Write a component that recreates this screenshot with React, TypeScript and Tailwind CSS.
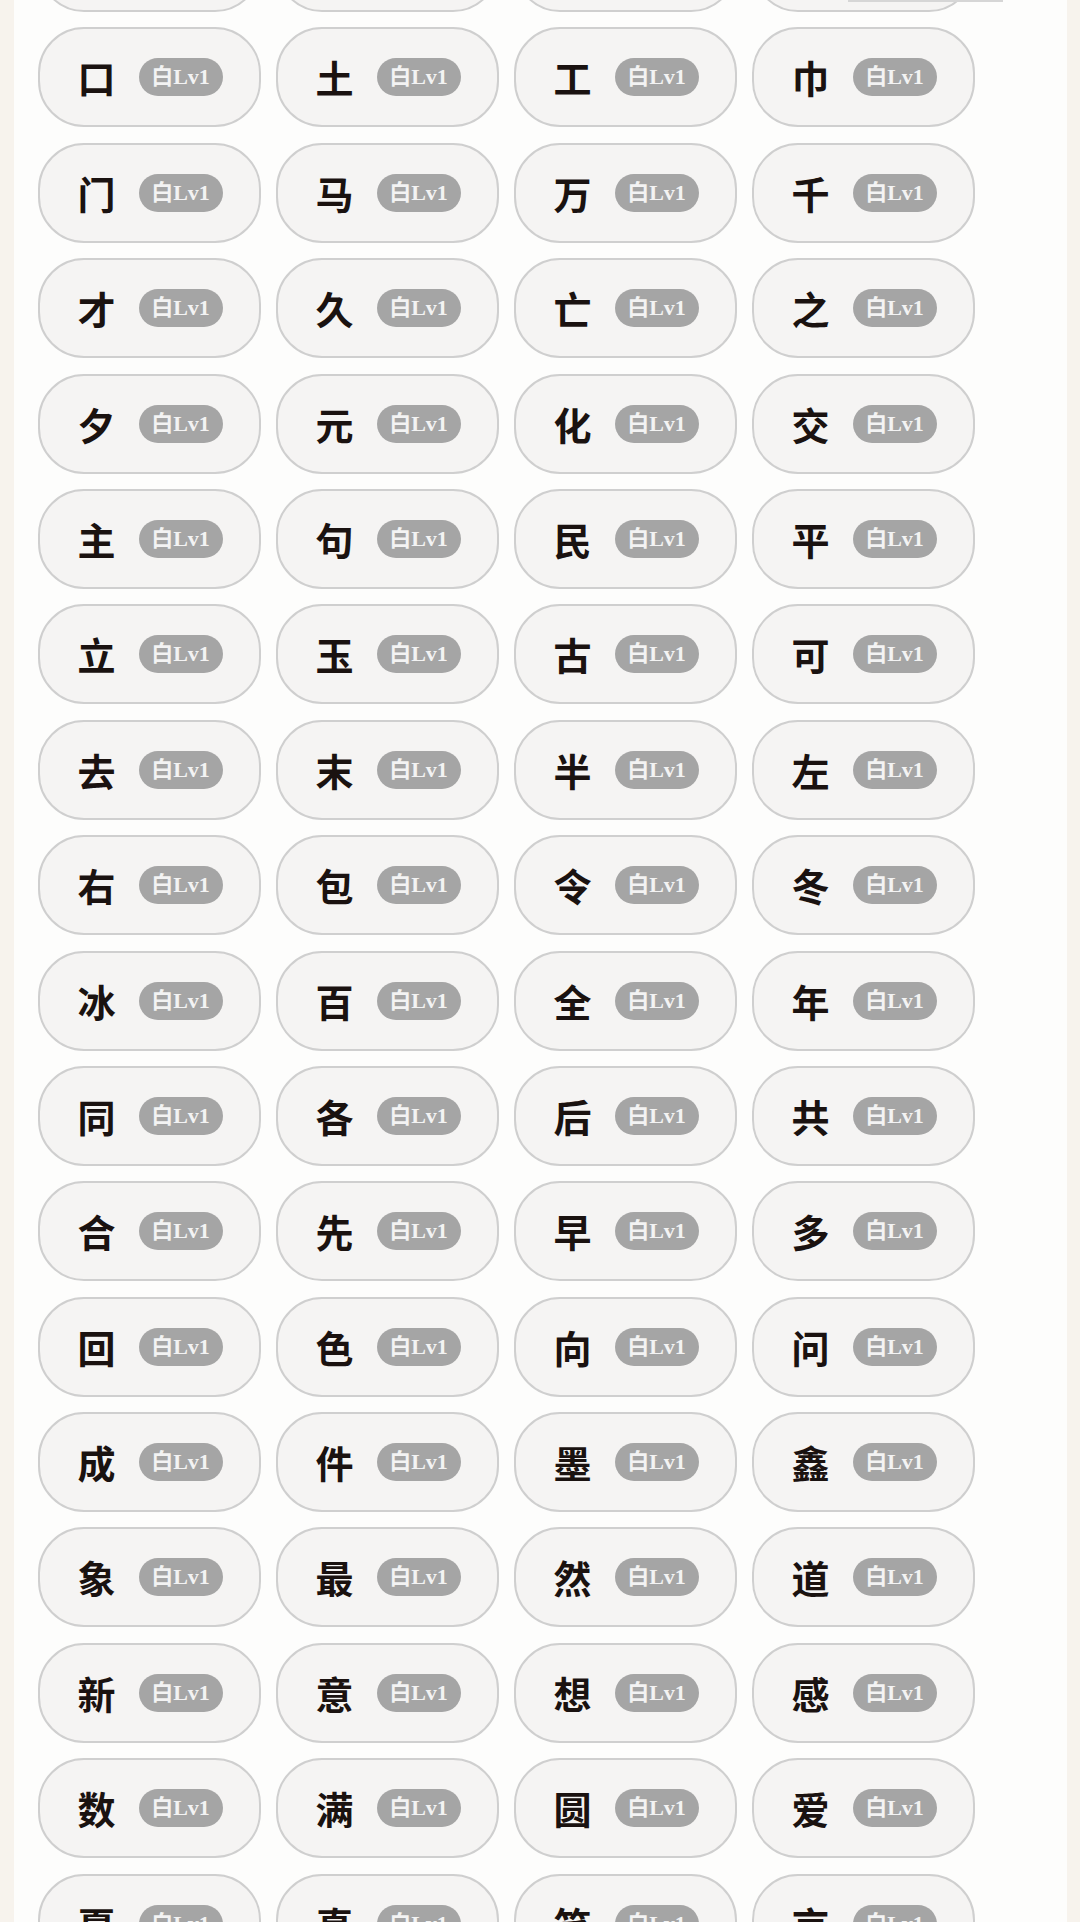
import React from "react";

const rows: string[][] = [
    ["", "", "", ""],
    ["口", "土", "工", "巾"],
    ["门", "马", "万", "千"],
    ["才", "久", "亡", "之"],
    ["夕", "元", "化", "交"],
    ["主", "句", "民", "平"],
    ["立", "玉", "古", "可"],
    ["去", "末", "半", "左"],
    ["右", "包", "令", "冬"],
    ["冰", "百", "全", "年"],
    ["同", "各", "后", "共"],
    ["合", "先", "早", "多"],
    ["回", "色", "向", "问"],
    ["成", "件", "墨", "鑫"],
    ["象", "最", "然", "道"],
    ["新", "意", "想", "感"],
    ["数", "满", "圆", "爱"],
    ["夏", "真", "笑", "京"],
];

const WordCard = ({ word }: { word: string }) => {
    return (
        <div className="h-[100px] rounded-[46px] border-2 border-[#cfcfcf] bg-[#f5f4f3] flex flex-row justify-center items-center gap-[22px]">
            {word && (
                <>
                    <p className="w-[40px] text-center text-[38px] leading-none font-bold text-[#1a1210] [font-family:'Noto_Sans_CJK_SC',sans-serif]">
                        {word}
                    </p>
                    {/* level badge */}
                    <div className="h-[38px] w-[84px] rounded-full bg-[#a5a5a5] flex justify-center items-center">
                        <span className="text-[22px] leading-none font-bold text-[#f3f3f3] [font-family:'Liberation_Serif','Noto_Sans_CJK_SC',serif]">
                            白Lv1
                        </span>
                    </div>
                </>
            )}
        </div>
    );
};

const App = () => {
    return (
        <div className="h-[1922px] w-[1080px] overflow-hidden bg-[#f7f3ed] pl-[14px] pr-[13px]">
            <div className="relative h-full flex flex-col bg-[#fdfdfc] pl-[24px]">
                {/* leftover edge from the row above */}
                <div className="absolute top-0 left-[834px] h-[2px] w-[155px] bg-[#d6d6d6]" />
                <div className="-mt-[88px] grid grid-cols-[repeat(4,223px)] gap-x-[15px] gap-y-[15.4px]">
                    {rows.flat().map((w, i) => (
                        <WordCard key={i} word={w} />
                    ))}
                </div>
            </div>
        </div>
    );
};

export default App;
